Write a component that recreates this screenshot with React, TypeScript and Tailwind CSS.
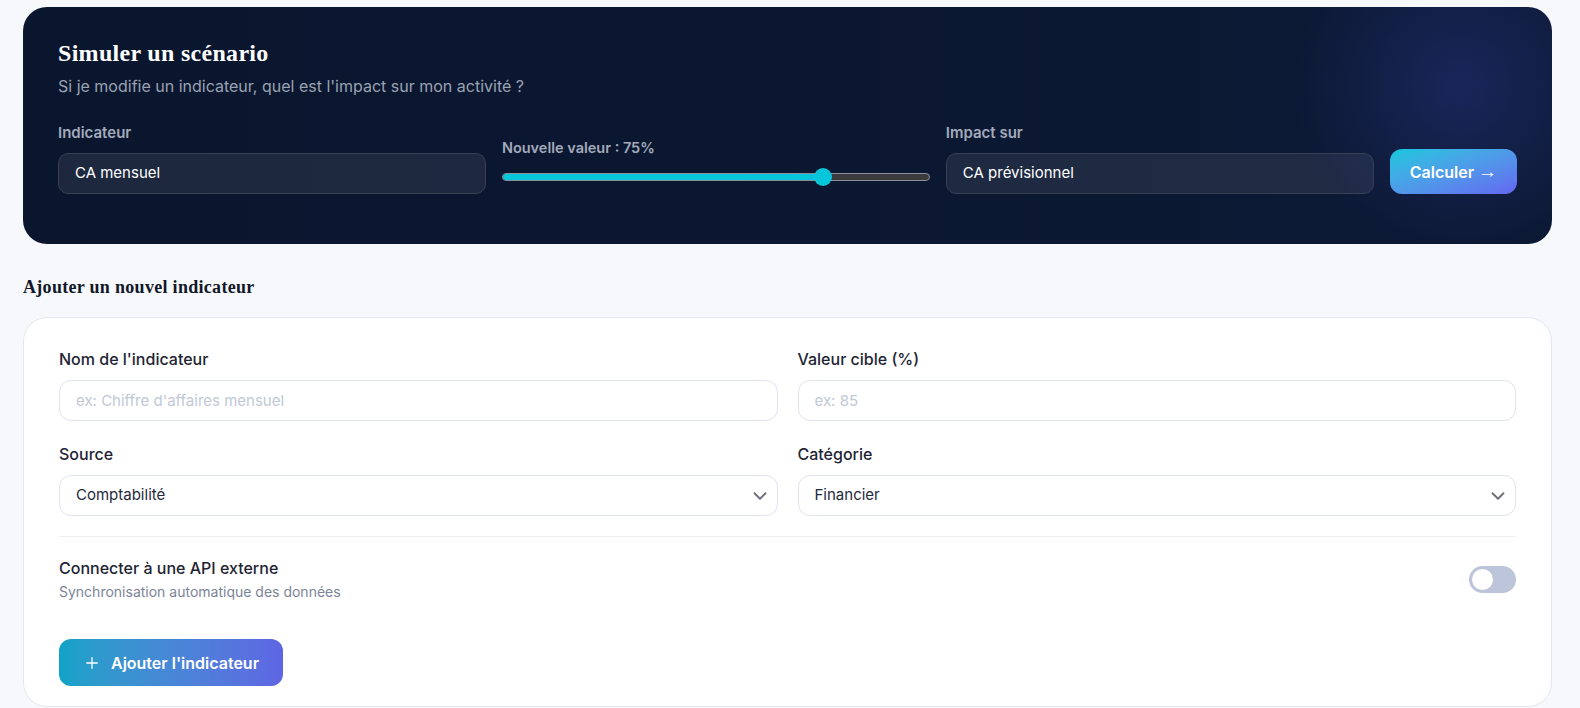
import { ChevronDown, Plus } from "lucide-react";

const sans = "font-['Inter','Liberation_Sans',sans-serif]";
const arial = "font-['Liberation_Sans','Arial',sans-serif]";
const serif = "font-['Liberation_Serif','Times_New_Roman',serif]";

function DarkField({ label, value }: { label: string; value: string }) {
    return (
        <div className="flex flex-col">
            <label className={`${sans} text-[15px] leading-5 font-semibold text-[#a3aabb]`}>{label}</label>
            <div
                className={`${sans} mt-2.5 flex h-[41px] items-center rounded-[10px] border border-[#364156] bg-white/[0.08] pl-4 text-[15px] text-white`}
            >
                {value}
            </div>
        </div>
    );
}

function Field({ label, placeholder }: { label: string; placeholder: string }) {
    return (
        <div className="flex flex-col">
            <label className={`${sans} text-base leading-5 font-medium text-[#1e2433]`}>{label}</label>
            <input
                placeholder={placeholder}
                className={`${sans} mt-[11px] h-[41px] rounded-xl border border-[#dfe3ee] bg-white pl-4 text-[15px] text-[#1e293b] outline-none placeholder:text-[#c2c8d6]`}
            />
        </div>
    );
}

function SelectField({ label, value }: { label: string; value: string }) {
    return (
        <div className="flex flex-col">
            <label className={`${sans} text-base leading-5 font-medium text-[#1e2433]`}>{label}</label>
            <button
                className={`${sans} mt-[11px] flex h-[41px] items-center justify-between rounded-xl border border-[#dfe3ee] bg-white pl-4 pr-1.5 text-[15px] text-[#1e293b]`}
            >
                <span>{value}</span>
                <ChevronDown size={22} strokeWidth={2} className="text-[#6b6e76]" />
            </button>
        </div>
    );
}

export default function App() {
    const value = 75;

    return (
        <div className="min-h-screen bg-[#f7f8fc] pl-[23px] pr-[28px] pt-[7px]">
            {/* Scenario simulator */}
            <section className="rounded-[24px] bg-[radial-gradient(circle_170px_at_94%_33%,rgba(36,48,120,0.55),transparent),linear-gradient(90deg,#0a162e,#0c1934)] px-[35px] pt-8 pb-[50px]">
                <h2 className={`${serif} text-[24px] leading-7 font-bold tracking-[0.3px] text-white`}>Simuler un scénario</h2>
                <p className={`${sans} mt-2 text-base leading-[22px] text-[#9aa2b2]`}>
                    Si je modifie un indicateur, quel est l'impact sur mon activité ?
                </p>

                <div className="mt-[26px] grid grid-cols-[1fr_1fr_1fr_auto] items-end gap-4">
                    <DarkField label="Indicateur" value="CA mensuel" />

                    <div className="flex flex-col pb-2">
                        <label className={`${sans} text-[14.5px] leading-5 font-semibold text-[#a3aabb]`}>
                            Nouvelle valeur : {value}%
                        </label>
                        <div className="relative mt-2.5 flex h-[18px] items-center">
                            <div className="flex h-2 w-full overflow-hidden rounded-full border border-[#8c8f96] bg-[#3b3b3d]">
                                <div className="h-full bg-[#06c6dc]" style={{ width: `${value}%` }} />
                            </div>
                            <div
                                className="absolute top-0 h-[18px] w-[18px] -translate-x-1/2 rounded-full bg-[#06c6dc]"
                                style={{ left: `${value}%` }}
                            />
                        </div>
                    </div>

                    <DarkField label="Impact sur" value="CA prévisionnel" />

                    <button
                        className={`${sans} flex h-[45px] items-center gap-1 rounded-xl bg-gradient-to-br from-[#06c8dd] to-[#6366f1] px-5 text-base font-semibold text-white`}
                    >
                        Calculer
                        <span className={`${arial} text-[19px] leading-none font-normal`}>→</span>
                    </button>
                </div>
            </section>

            {/* New indicator form */}
            <h3 className={`${serif} mt-[33px] text-[18px] leading-5 font-bold tracking-[0.3px] text-[#111827]`}>
                Ajouter un nouvel indicateur
            </h3>

            <section className="mt-5 rounded-[24px] border border-[#e3e7ef] bg-white px-[35px] pt-[31px] pb-5">
                <div className="grid grid-cols-2 gap-x-5 gap-y-[23px]">
                    <Field label="Nom de l'indicateur" placeholder="ex: Chiffre d'affaires mensuel" />
                    <Field label="Valeur cible (%)" placeholder="ex: 85" />
                    <SelectField label="Source" value="Comptabilité" />
                    <SelectField label="Catégorie" value="Financier" />
                </div>

                <div className="mt-5 border-t border-[#eceff5]" />

                <div className="mt-5 flex items-center justify-between">
                    <div>
                        <p className={`${sans} text-base leading-[22px] font-medium text-[#1e2433]`}>
                            Connecter à une API externe
                        </p>
                        <p className={`${sans} mt-[3px] text-sm leading-5 text-[#7b8597]`}>
                            Synchronisation automatique des données
                        </p>
                    </div>
                    <button className="flex h-[27px] w-[47px] items-center rounded-full bg-[#bcc5da] px-[3px]">
                        <span className="h-[21px] w-[21px] rounded-full bg-white" />
                    </button>
                </div>

                <button
                    className={`${sans} mt-[37px] flex h-[47px] items-center gap-2.5 rounded-xl bg-gradient-to-r from-[#0fa3c7] to-[#5e66e3] px-6 text-base font-semibold text-white`}
                >
                    <Plus size={18} strokeWidth={1.75} />
                    Ajouter l'indicateur
                </button>
            </section>
        </div>
    );
}
